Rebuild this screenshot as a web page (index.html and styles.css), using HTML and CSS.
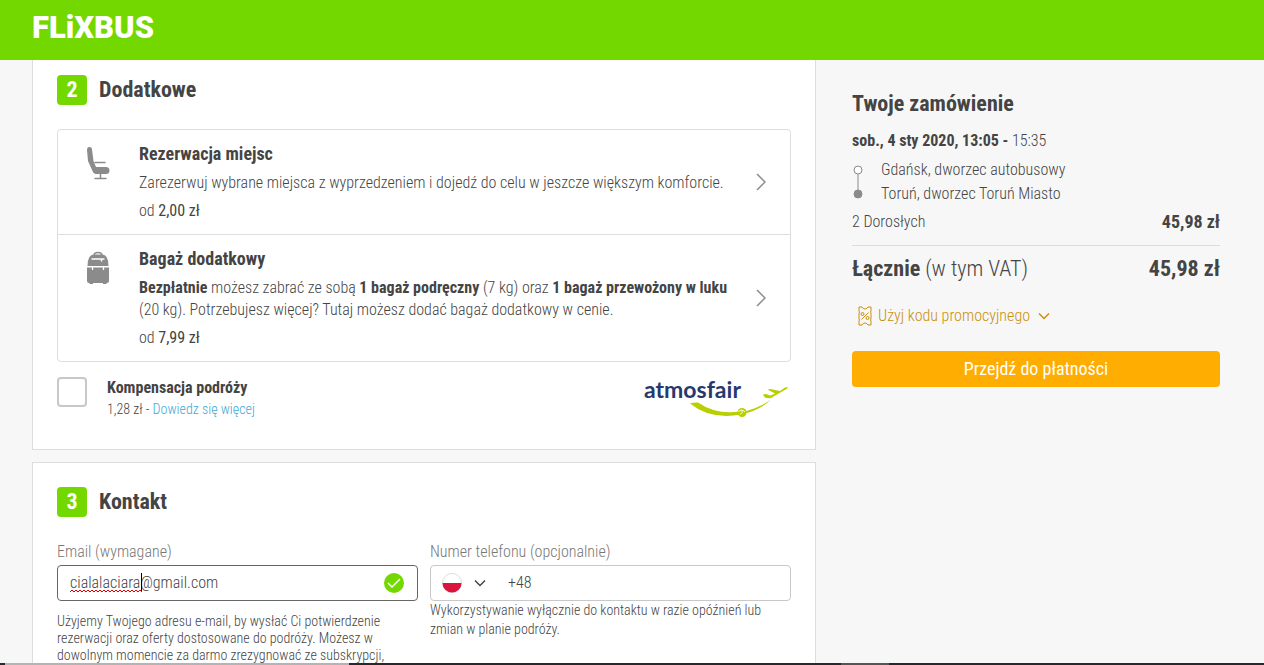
FILE: index.html
```html
<!DOCTYPE html>
<html lang="pl">
<head>
  <meta charset="UTF-8">
  <meta name="viewport" content="width=device-width, initial-scale=1.0">
  <title>FlixBus - Rezerwacja</title>
  <link rel="stylesheet" href="styles.css">
</head>
<body>
  <header class="topbar">
    <a href="#" class="logo">FLiXBUS</a>
  </header>

  <div class="page">
    <main class="steps">
      <section class="card extras">
        <h2 class="step-title"><span class="step-number">2</span>Dodatkowe</h2>

        <div class="options">
          <a href="#" class="option">
            <svg class="option-icon" viewBox="0 0 24 34">
              <path d="M1 4Q1 1 3.500 1T6 3.500L7.500 15 10 21H20Q23.500 21 23.500 24.500T20 28H9.500Q7.500 28 6.500 25L2 15Z" fill="#8b8b8b"/>
              <path d="M9 16.500H19M14.500 28V32M9 32.500H20" fill="none" stroke="#8b8b8b" stroke-width="1.500" stroke-linecap="round"/>
            </svg>
            <div class="option-text">
              <h3>Rezerwacja miejsc</h3>
              <p>Zarezerwuj wybrane miejsca z wyprzedzeniem i dojedź do celu w jeszcze większym komforcie.</p>
              <p class="price">od <span>2,00 zł</span></p>
            </div>
            <svg class="chevron" viewBox="0 0 10 18"><path d="M1 1l8 8-8 8"/></svg>
          </a>

          <a href="#" class="option">
            <svg class="option-icon" viewBox="0 0 24 34">
              <path d="M8 4.500Q8 1.500 12 1.500T16 4.500" fill="none" stroke="#8b8b8b" stroke-width="1.500"/>
              <path d="M1.500 15Q1.500 3.500 8 3.500H16Q22.500 3.500 22.500 15Z" fill="#8b8b8b"/>
              <path d="M1 16.500H23V30Q23 32 21 32H3Q1 32 1 30Z" fill="#8b8b8b"/>
              <path d="M3.500 31.500H7V33H3.500ZM17 31.500H20.500V33H17Z" fill="#8b8b8b"/>
              <path d="M5.500 8H18.500M6.500 15V19M17.500 15V19" stroke="#fff" stroke-width="1.300"/>
              <path d="M15.500 8V10.500" stroke="#fff" stroke-width="1.500"/>
            </svg>
            <div class="option-text">
              <h3>Bagaż dodatkowy</h3>
              <p><b>Bezpłatnie</b> możesz zabrać ze sobą <b>1 bagaż podręczny</b> (7 kg) oraz <b>1 bagaż przewożony w luku</b> (20 kg). Potrzebujesz więcej? Tutaj możesz dodać bagaż dodatkowy w cenie.</p>
              <p class="price">od <span>7,99 zł</span></p>
            </div>
            <svg class="chevron" viewBox="0 0 10 18"><path d="M1 1l8 8-8 8"/></svg>
          </a>
        </div>

        <div class="compensation">
          <input type="checkbox" id="compensation">
          <div class="compensation-text">
            <label for="compensation">Kompensacja podróży</label>
            <p>1,28 zł - <a href="#">Dowiedz się więcej</a></p>
          </div>
          <svg class="atmosfair" viewBox="0 3 147 44" role="img" aria-label="atmosfair">
            <text x="0" y="24">atmosfair</text>
            <path d="M46 29.500Q50 28 54 28.500Q72 41 96 37.500L97 40.500Q66 46 46 29.500Z"/>
            <circle cx="98" cy="38.500" r="4.500"/>
            <path d="M101 37.500Q116 33.500 127 25.500Q117 35.500 101 39.500Z"/>
            <path d="M119 20.500L122 20 126.500 21.500 131 19.500 123.500 15.500 126.500 15 136 17 141 13.500Q145.500 12 142.500 15L127 24Q121 25.500 119 20.500Z"/>
            <path d="M94.500 37.500Q98 34.500 101 38M96 40.500Q99 38.500 98 36.500" class="atmosfair-line"/>
          </svg>
        </div>
      </section>

      <section class="card contact">
        <h2 class="step-title"><span class="step-number">3</span>Kontakt</h2>

        <form class="fields">
          <div class="field">
            <label for="email">Email (wymagane)</label>
            <div class="input-box focused">
              <input type="text" id="email" value="cialalaciara@gmail.com">
              <svg class="spelling" viewBox="0 0 72 4"><path d="M0 3l2-2 2 2 2-2 2 2 2-2 2 2 2-2 2 2 2-2 2 2 2-2 2 2 2-2 2 2 2-2 2 2 2-2 2 2 2-2 2 2 2-2 2 2 2-2 2 2 2-2 2 2 2-2 2 2 2-2 2 2 2-2 2 2 2-2 2 2 2-2 2 2"/></svg>
              <span class="caret"></span>
              <svg class="valid" viewBox="0 0 20 20"><circle cx="10" cy="10" r="10"/><path d="M4 10l4 4 8-8"/></svg>
            </div>
            <p class="hint hint-email">Użyjemy Twojego adresu e-mail, by wysłać Ci potwierdzenie rezerwacji oraz oferty dostosowane do podróży. Możesz w dowolnym momencie za darmo zrezygnować ze subskrypcji,</p>
          </div>

          <div class="field">
            <label for="phone">Numer telefonu (opcjonalnie)</label>
            <div class="input-box">
              <div class="country">
                <svg class="flag" viewBox="0 0 20 20"><circle cx="10" cy="10" r="9.500" fill="#fff" stroke="#ddd"/><path d="M0.500 10H19.500A9.500 9.500 0 0 1 0.500 10Z" fill="#dc143c"/></svg>
                <svg class="arrow" viewBox="0 0 12 8"><path d="M1 1.500l5 5 5-5"/></svg>
                <select aria-label="Kraj"><option value="PL" aria-label="Polska"></option></select>
              </div>
              <input type="tel" id="phone" value="+48">
            </div>
            <p class="hint">Wykorzystywanie wyłącznie do kontaktu w razie opóźnień lub zmian w planie podróży.</p>
          </div>
        </form>
      </section>
    </main>

    <aside class="summary">
      <h2>Twoje zamówienie</h2>
      <p class="date"><b>sob., 4 sty 2020, 13:05 -</b> 15:35</p>
      <div class="route">
        <svg class="route-line" viewBox="0 0 12 36"><path d="M6 10V28"/><circle cx="6" cy="6" r="4" fill="#fff"/><circle cx="6" cy="30" r="4" fill="#8b8b8b"/></svg>
        <ul>
          <li>Gdańsk, dworzec autobusowy</li>
          <li>Toruń, dworzec Toruń Miasto</li>
        </ul>
      </div>
      <div class="row"><span>2 Dorosłych</span><b>45,98 zł</b></div>
      <div class="row total"><span><b>Łącznie</b> (w tym VAT)</span><b>45,98 zł</b></div>
      <button type="button" class="promo">
        <svg class="ticket" viewBox="0 0 14 20"><path d="M1 1H4Q5 3 7 3T10 1H13V5Q12 6 13 7V13Q12 14 13 15V19H10Q9 17 7 17T4 19H1V15Q2 14 1 13V7Q2 6 1 5ZM10.500 6.500L3.500 13.500"/><circle cx="4.500" cy="8" r="1.500"/><circle cx="9.500" cy="12" r="1.500"/></svg>
        Użyj kodu promocyjnego
        <svg class="arrow" viewBox="0 0 12 8"><path d="M1 1.500l5 5 5-5"/></svg>
      </button>
      <button type="button" class="pay">Przejdź do płatności</button>
    </aside>
  </div>

  <div class="bottom-edge"></div>
</body>
</html>
```
FILE: styles.css
```css
* {
  box-sizing: border-box;
}

body {
  margin: 0;
  height: 100vh;
  overflow: hidden;
  background: #f7f7f7;
  color: #444;
  font-family: "Roboto Condensed", "Liberation Sans Narrow", Roboto, sans-serif;
  font-size: 16px;
  font-weight: 300;
  line-height: 22px;
}

h2, h3, p, ul {
  margin: 0;
  padding: 0;
}

h2 {
  font-size: 22px;
  line-height: 30px;
  font-weight: 700;
}

b {
  font-weight: 700;
}

a {
  color: inherit;
  text-decoration: none;
}

ul {
  list-style: none;
}

input, button, select {
  font: inherit;
  color: inherit;
}

.topbar {
  height: 60px;
  padding: 0 32px;
  background: #73d700;
}

.logo {
  color: #fff;
  font-family: Roboto, sans-serif;
  font-size: 31px;
  font-weight: 900;
  line-height: 56px;
}

.page {
  display: flex;
  gap: 36px;
  padding: 0 44px 0 32px;
}

/* steps */
.steps {
  flex: 1;
  min-width: 0;
}

.card {
  background: #fff;
  border: 1px solid #ddd;
  padding: 24px;
  margin-bottom: 12px;
}

.extras {
  border-top: none;
  padding-top: 15px;
  padding-bottom: 28px;
}

.step-title {
  display: flex;
  align-items: center;
  gap: 12px;
  margin-bottom: 24px;
}

.step-number {
  width: 30px;
  height: 30px;
  border-radius: 4px;
  background: #73d700;
  color: #fff;
  text-align: center;
}

.options {
  border: 1px solid #ddd;
  border-radius: 4px;
}

.option {
  display: flex;
  align-items: flex-start;
  padding: 12px 24px 12px 28px;
}

.option + .option {
  border-top: 1px solid #ddd;
}

.option-icon {
  width: 24px;
  height: 34px;
  margin-top: 4px;
}

.option-text {
  flex: 1;
  margin: 0 24px 0 29px;
}

.option-text h3 {
  font-size: 18px;
  line-height: 24px;
  margin-bottom: 6px;
}

.price {
  margin-top: 6px;
}

.price span {
  font-weight: 400;
}

.chevron {
  width: 10px;
  height: 18px;
  align-self: center;
  fill: none;
  stroke: #8b8b8b;
  stroke-width: 1.5;
}

.compensation {
  display: flex;
  align-items: flex-start;
  padding-top: 15px;
}

.compensation input {
  appearance: none;
  width: 30px;
  height: 30px;
  margin: 0;
  border: 2px solid #c8c8c8;
  border-radius: 4px;
  background: #fff;
}

.compensation-text {
  flex: 1;
  margin-left: 20px;
}

.compensation-text label {
  display: block;
  font-weight: 700;
}

.compensation-text p {
  font-size: 14px;
  line-height: 20px;
}

.compensation-text a {
  color: #3fa9d6;
}

.atmosfair {
  width: 147px;
  height: 44px;
  fill: #b9cf00;
}

.atmosfair text {
  fill: #28386b;
  font-family: Lato, "Open Sans", sans-serif;
  font-size: 23px;
  font-weight: 700;
}

.atmosfair-line {
  fill: none;
  stroke: #fff;
}

/* contact form */
.fields {
  display: grid;
  grid-template-columns: 1fr 1fr;
  gap: 12px;
}

.field label {
  display: block;
  color: #777;
  margin-bottom: 2px;
}

.input-box {
  position: relative;
  display: flex;
  align-items: center;
  height: 36px;
  border: 1px solid #c8c8c8;
  border-radius: 4px;
  background: #fff;
}

.input-box.focused {
  border-color: #666;
}

.input-box input {
  flex: 1;
  min-width: 0;
  height: 34px;
  padding: 0 12px 2px;
  border: none;
  outline: none;
  background: none;
}

.spelling {
  position: absolute;
  left: 12px;
  top: 23px;
  width: 72px;
  height: 4px;
  fill: none;
  stroke: #e00000;
}

.caret {
  position: absolute;
  left: 83px;
  top: 7px;
  width: 1px;
  height: 18px;
  background: #000;
}

.valid {
  width: 20px;
  height: 20px;
  margin-right: 13px;
  fill: #73d700;
}

.valid path {
  fill: none;
  stroke: #fff;
  stroke-width: 1.5;
}

.country {
  position: relative;
  display: flex;
  align-items: center;
  gap: 12px;
  padding-left: 11px;
  width: 65px;
}

.country select {
  position: absolute;
  inset: 0;
  appearance: none;
  border: none;
  background: none;
  width: 100%;
}

.flag {
  width: 20px;
  height: 20px;
}

.arrow {
  width: 12px;
  height: 8px;
  fill: none;
  stroke: currentColor;
  stroke-width: 1.5;
}

.hint {
  font-size: 14px;
  line-height: 19px;
}

.hint-email {
  margin-top: 12px;
  line-height: 17px;
}

/* order summary */
.summary {
  width: 368px;
  padding-top: 29px;
}

.summary h2 {
  margin-bottom: 11px;
}

.route {
  display: flex;
  gap: 17px;
  margin: 6px 0 4px;
  line-height: 24px;
}

.route-line {
  width: 12px;
  height: 36px;
  margin-top: 6px;
  fill: none;
  stroke: #8b8b8b;
}

.row {
  display: flex;
  justify-content: space-between;
  line-height: 24px;
}

.row > b {
  font-size: 18px;
}

.total {
  margin-top: 11px;
  padding-top: 8px;
  border-top: 1px solid #ddd;
  font-size: 22px;
  line-height: 30px;
}

.total > b {
  font-size: 22px;
}

.promo {
  display: flex;
  align-items: center;
  gap: 6px;
  margin: 21px 0 24px;
  padding: 0 6px;
  border: none;
  background: none;
  color: #c98f0e;
}

.promo .arrow {
  margin-left: 2px;
}

.ticket {
  width: 14px;
  height: 20px;
  fill: none;
  stroke: #c98f0e;
}

.pay {
  display: block;
  width: 100%;
  height: 36px;
  border: none;
  border-radius: 4px;
  background: #ffad00;
  color: #fff;
  font-size: 18px;
  font-weight: 400;
}

.bottom-edge {
  position: fixed;
  left: 0;
  right: 0;
  bottom: 0;
  height: 2px;
  background: linear-gradient(to right, #25282c 5px, #b4b4b4 5px 349px, #25282c 349px 841px, #555 841px 889px, #25282c 889px);
}
```
